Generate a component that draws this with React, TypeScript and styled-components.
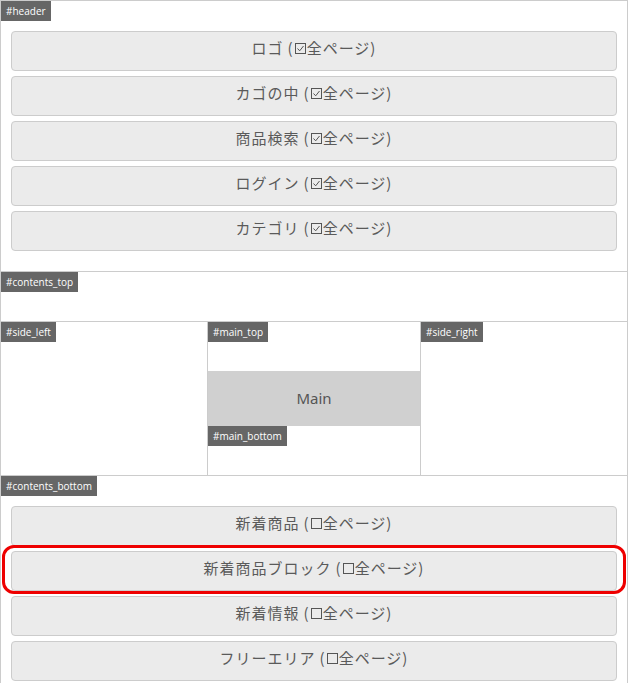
import React from "react";
import styled, { createGlobalStyle } from "styled-components";

const Global = createGlobalStyle`
  html, body { margin: 0; padding: 0; background: #fff; }
  body { font-family: "Noto Sans CJK JP", "Noto Sans", sans-serif; }
`;

const Frame = styled.div`
  width: 628px;
  box-sizing: border-box;
  border: 1px solid #ccc;
  border-bottom: none;
`;

const Section = styled.section<{ $h?: number }>`
  border-bottom: 1px solid #ccc;
  ${(p) => (p.$h ? `height: ${p.$h}px;` : "")}
  box-sizing: content-box;
`;

const Label = styled.div`
  display: inline-block;
  height: 20px;
  line-height: 20px;
  padding: 0 5px;
  background: #666;
  color: #fff;
  font-family: "Open Sans", "Noto Sans", sans-serif;
  font-size: 10px;
  vertical-align: top;
`;

const LabelRow = styled.div`
  height: 20px;
`;

const BlockList = styled.div`
  display: flex;
  flex-direction: column;
  gap: 5px;
  padding: 10px 10px 20px;
`;

const Block = styled.div<{ $hl?: boolean }>`
  position: relative;
  height: 40px;
  box-sizing: border-box;
  border: 1px solid #ccc;
  border-radius: 4px;
  background: #ebebeb;
  color: #5a5a5a;
  font-size: 15px;
  letter-spacing: 1px;
  padding-bottom: 8px;
  display: flex;
  align-items: center;
  justify-content: center;
  ${(p) =>
    p.$hl
      ? `&::after {
    content: "";
    position: absolute;
    left: -10px;
    right: -10px;
    top: -7px;
    bottom: -4px;
    border: 3px solid #e00;
    border-radius: 12px;
    pointer-events: none;
  }`
      : ""}
`;

const Gap = styled.span`
  display: inline-block;
  width: 4px;
`;

const Check = styled.span`
  display: inline-block;
  width: 11px;
  height: 11px;
  box-sizing: border-box;
  border: 1px solid #555;
  margin: 0 1px 0 1px;
  position: relative;
  top: 1px;
`;

const Tick = styled.svg`
  position: absolute;
  left: 1px;
  top: 1px;
`;

const Middle = styled.div`
  display: grid;
  grid-template-columns: 206px 1fr 206px;
  height: 153px;
  border-bottom: 1px solid #ccc;
`;

const MainCol = styled.div`
  border-left: 1px solid #ccc;
  border-right: 1px solid #ccc;
  display: grid;
  grid-template-rows: 49px 55px 49px;
`;

const MainBox = styled.div`
  background: #d0d0d0;
  color: #555;
  font-family: "Noto Sans", sans-serif;
  font-size: 15px;
  padding-bottom: 2px;
  display: flex;
  align-items: center;
  justify-content: center;
`;

const header = ["ロゴ", "カゴの中", "商品検索", "ログイン", "カテゴリ"];
const bottom = ["新着商品", "新着商品ブロック", "新着情報", "フリーエリア"];

function Box({ checked }: { checked: boolean }) {
  return (
    <Check>
      {checked && (
        <Tick width="7" height="7" viewBox="0 0 7 7">
          <path d="M0.5 3.5 L2.7 5.8 L6.5 1" fill="none" stroke="#555" strokeWidth="1" />
        </Tick>
      )}
    </Check>
  );
}

export default function App() {
  return (
    <>
      <Global />
      <Frame>
        <Section>
          <LabelRow>
            <Label>#header</Label>
          </LabelRow>
          <BlockList>
            {header.map((t) => (
              <Block key={t}>
                {t}
                <Gap />(<Box checked />全ページ)
              </Block>
            ))}
          </BlockList>
        </Section>
        <Section $h={49}>
          <LabelRow>
            <Label>#contents_top</Label>
          </LabelRow>
        </Section>
        <Middle>
          <div>
            <LabelRow>
              <Label>#side_left</Label>
            </LabelRow>
          </div>
          <MainCol>
            <div>
              <LabelRow>
                <Label>#main_top</Label>
              </LabelRow>
            </div>
            <MainBox>Main</MainBox>
            <div>
              <LabelRow>
                <Label>#main_bottom</Label>
              </LabelRow>
            </div>
          </MainCol>
          <div>
            <LabelRow>
              <Label>#side_right</Label>
            </LabelRow>
          </div>
        </Middle>
        <Section>
          <LabelRow>
            <Label>#contents_bottom</Label>
          </LabelRow>
          <BlockList>
            {bottom.map((t, i) => (
              <Block key={t} $hl={i === 1}>
                {t}
                <Gap />(<Box checked={false} />全ページ)
              </Block>
            ))}
          </BlockList>
        </Section>
      </Frame>
    </>
  );
}
